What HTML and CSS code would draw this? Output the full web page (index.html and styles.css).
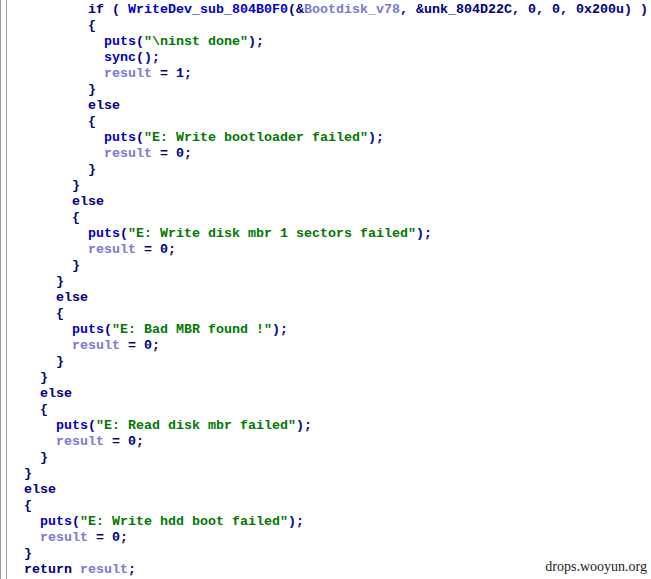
FILE: index.html
```html
<!DOCTYPE html>
<html>
<head>
<meta charset="utf-8">
<link rel="stylesheet" href="styles.css">
</head>
<body>
<div class="frame">
<div class="code">
<div class="ln i4"><span class="k">if</span> ( <span class="f">WriteDev_sub_804B0F0</span>(&amp;<span class="v">Bootdisk_v78</span>, &amp;<span class="g">unk_804D22C</span>, 0, 0, 0x200u) )</div>
<div class="ln i4">{</div>
<div class="ln i5"><span class="f">puts</span>(<span class="s">"\ninst done"</span>);</div>
<div class="ln i5"><span class="f">sync</span>();</div>
<div class="ln i5"><span class="v">result</span> = 1;</div>
<div class="ln i4">}</div>
<div class="ln i4"><span class="k">else</span></div>
<div class="ln i4">{</div>
<div class="ln i5"><span class="f">puts</span>(<span class="s">"E: Write bootloader failed"</span>);</div>
<div class="ln i5"><span class="v">result</span> = 0;</div>
<div class="ln i4">}</div>
<div class="ln i3">}</div>
<div class="ln i3"><span class="k">else</span></div>
<div class="ln i3">{</div>
<div class="ln i4"><span class="f">puts</span>(<span class="s">"E: Write disk mbr 1 sectors failed"</span>);</div>
<div class="ln i4"><span class="v">result</span> = 0;</div>
<div class="ln i3">}</div>
<div class="ln i2">}</div>
<div class="ln i2"><span class="k">else</span></div>
<div class="ln i2">{</div>
<div class="ln i3"><span class="f">puts</span>(<span class="s">"E: Bad MBR found !"</span>);</div>
<div class="ln i3"><span class="v">result</span> = 0;</div>
<div class="ln i2">}</div>
<div class="ln i1">}</div>
<div class="ln i1"><span class="k">else</span></div>
<div class="ln i1">{</div>
<div class="ln i2"><span class="f">puts</span>(<span class="s">"E: Read disk mbr failed"</span>);</div>
<div class="ln i2"><span class="v">result</span> = 0;</div>
<div class="ln i1">}</div>
<div class="ln i0">}</div>
<div class="ln i0"><span class="k">else</span></div>
<div class="ln i0">{</div>
<div class="ln i1"><span class="f">puts</span>(<span class="s">"E: Write hdd boot failed"</span>);</div>
<div class="ln i1"><span class="v">result</span> = 0;</div>
<div class="ln i0">}</div>
<div class="ln i0"><span class="k">return</span> <span class="v">result</span>;</div>
</div>
</div>
<div class="mark">drops.wooyun.org</div>
</body>
</html>
```
FILE: styles.css
```css
html, body {
  margin: 0;
  padding: 0;
  background: #ffffff;
  height: 100%;
  overflow: hidden;
}
.frame {
  height: 100%;
  border-left: 1px solid #9a9a9a;
  padding-left: 5px;
  background: #ffffff;
}
.code {
  height: 100%;
  box-sizing: border-box;
  border-left: 1px solid #9a9a9a;
  padding-left: 17px;
  padding-top: 2px;
  background: #ffffff;
  font-family: "Liberation Mono", "DejaVu Sans Mono", monospace;
  font-weight: bold;
  font-size: 13.33px;
  line-height: 16px;
  color: #000080;
}
.ln {
  height: 16px;
  white-space: pre;
}
.i0 { padding-left: 0; }
.i1 { padding-left: 16px; }
.i2 { padding-left: 32px; }
.i3 { padding-left: 48px; }
.i4 { padding-left: 64px; }
.i5 { padding-left: 80px; }
.k { color: #000080; }
.f { color: #0000c8; }
.v { color: #7878d8; }
.g { color: #000080; }
.s { color: #007800; }
.mark {
  position: absolute;
  right: 4px;
  bottom: 4px;
  font-family: "Liberation Serif", "Times New Roman", serif;
  font-size: 14px;
  color: #222222;
  background: #ffffff;
}
```
